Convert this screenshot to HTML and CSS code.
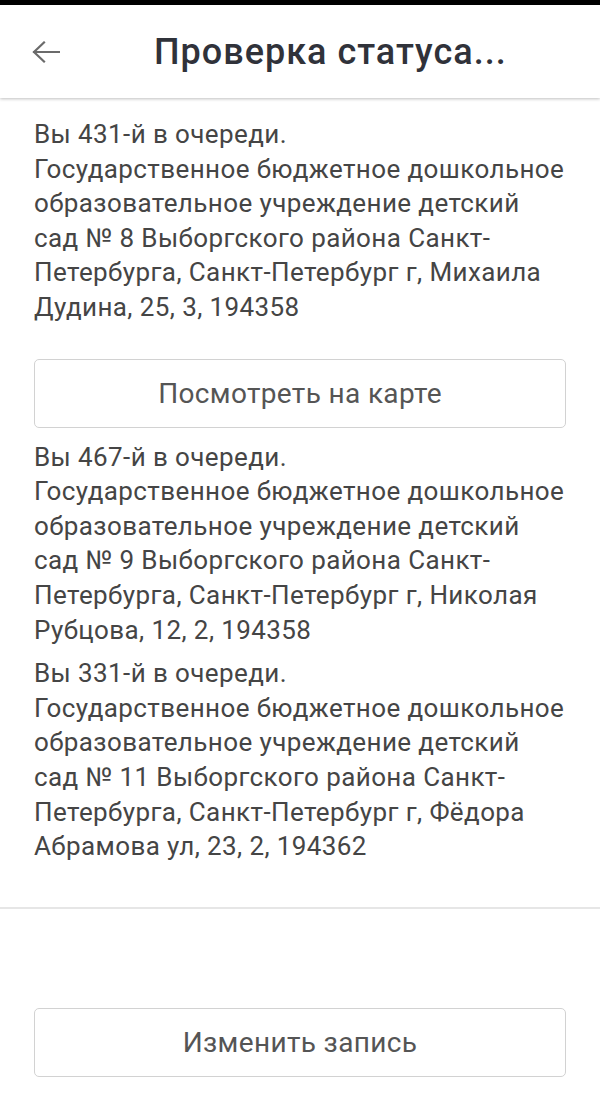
FILE: index.html
```html
<!DOCTYPE html>
<html lang="ru">
<head>
<meta charset="utf-8">
<link rel="stylesheet" href="styles.css">
</head>
<body>
<div class="statusbar"></div>
<header class="appbar">
  <button class="back" aria-label="Назад">
    <svg width="28" height="22" viewBox="0 0 28 22"><path d="M12 1.5 L2 11 L12 20.5 M2 11 H27" fill="none" stroke="#6b6b6b" stroke-width="2.2" stroke-linecap="square"/></svg>
  </button>
  <h1 class="title">Проверка статуса...</h1>
</header>
<main class="content">
  <section class="entry">
    <p class="entry-text">Вы 431-й в очереди.<br>Государственное бюджетное дошкольное образовательное учреждение детский сад № 8 Выборгского района Санкт-Петербурга, Санкт-Петербург г, Михаила Дудина, 25, 3, 194358</p>
    <button class="btn btn-map">Посмотреть на карте</button>
  </section>
  <section class="entry">
    <p class="entry-text">Вы 467-й в очереди.<br>Государственное бюджетное дошкольное образовательное учреждение детский сад № 9 Выборгского района Санкт-Петербурга, Санкт-Петербург г, Николая Рубцова, 12, 2, 194358</p>
  </section>
  <section class="entry">
    <p class="entry-text">Вы 331-й в очереди.<br>Государственное бюджетное дошкольное образовательное учреждение детский сад № 11 Выборгского района Санкт-Петербурга, Санкт-Петербург г, Фёдора Абрамова ул, 23, 2, 194362</p>
  </section>
</main>
<div class="divider"></div>
<footer class="footer">
  <button class="btn">Изменить запись</button>
</footer>
</body>
</html>
```
FILE: styles.css
```css
html, body {
  margin: 0;
  padding: 0;
  background: #fff;
}
body {
  font-family: Roboto, "Noto Sans", "Liberation Sans", sans-serif;
  width: 600px;
  height: 1117px;
  overflow: hidden;
}
.statusbar {
  height: 5px;
  background: #000;
}
.appbar {
  height: 93px;
  display: flex;
  align-items: center;
  background: #fff;
  box-shadow: 0 1px 3px rgba(0,0,0,0.25);
  position: relative;
  z-index: 1;
}
.back {
  border: none;
  background: none;
  padding: 0;
  margin: 0 0 0 32px;
  width: 28px;
  height: 22px;
  display: flex;
}
.title {
  margin: 0 0 0 94px;
  font-size: 36px;
  font-weight: 500;
  color: #30323a;
  letter-spacing: 1px;
}
.content {
  padding: 19px 34px 43px 34px;
  display: flex;
  flex-direction: column;
  gap: 9px;
}
.entry-text {
  margin: 0;
  font-size: 26px;
  letter-spacing: 0.4px;
  line-height: 34.6px;
  color: #454545;
}
.btn {
  display: block;
  width: 100%;
  height: 69px;
  border: 1.5px solid #d2d2d2;
  border-radius: 5px;
  background: #fff;
  font-family: inherit;
  font-size: 28px;
  letter-spacing: 0.35px;
  color: #555;
  padding: 0;
}
.btn-map {
  margin: 34px 0 3px 0;
}
.divider {
  height: 2px;
  background: #e6e6e6;
}
.footer {
  padding: 99px 34px 0 34px;
}
```
